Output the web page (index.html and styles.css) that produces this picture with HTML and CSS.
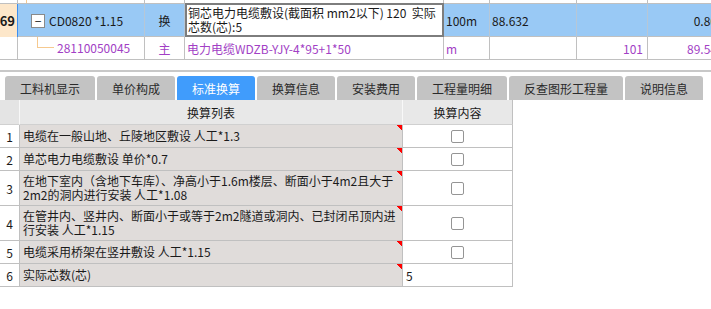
FILE: index.html
```html
<!DOCTYPE html>
<html lang="zh-CN">
<head>
  <meta charset="UTF-8">
  <title>标准换算</title>
  <link rel="stylesheet" href="styles.css">
</head>
<body>
  <div class="bill">
    <div class="row stub">
      <div class="c"></div>
      <div class="c"><span class="tree-up"></span></div>
      <div class="c"></div>
      <div class="c"></div>
      <div class="c"></div>
      <div class="c"></div>
      <div class="c"></div>
      <div class="c"></div>
    </div>
    <div class="row sel">
      <div class="c no">69</div>
      <div class="c code"><span class="fold">−</span>CD0820 *1.15</div>
      <div class="c mid">换</div>
      <div class="c edit">铜芯电力电缆敷设(截面积 mm2以下) 120&nbsp;&nbsp;实际<br>芯数(芯):5</div>
      <div class="c">100m</div>
      <div class="c">88.632</div>
      <div class="c"></div>
      <div class="c num">0.86</div>
    </div>
    <div class="row sub">
      <div class="c"></div>
      <div class="c code"><span class="branch"></span>28110050045</div>
      <div class="c mid">主</div>
      <div class="c">电力电缆WDZB-YJY-4*95+1*50</div>
      <div class="c">m</div>
      <div class="c"></div>
      <div class="c num">101</div>
      <div class="c num">89.54</div>
    </div>
  </div>

  <div class="tabs">
    <div class="tab w90">工料机显示</div>
    <div class="tab">单价构成</div>
    <div class="tab active">标准换算</div>
    <div class="tab">换算信息</div>
    <div class="tab">安装费用</div>
    <div class="tab w90">工程量明细</div>
    <div class="tab w114">反查图形工程量</div>
    <div class="tab">说明信息</div>
  </div>

  <div class="conv">
    <div class="h"></div>
    <div class="h">换算列表</div>
    <div class="h">换算内容</div>

    <div class="idx">1</div>
    <div class="item">电缆在一般山地、丘陵地区敷设 人工*1.3</div>
    <div class="val"><span class="check"></span></div>

    <div class="idx">2</div>
    <div class="item">单芯电力电缆敷设 单价*0.7</div>
    <div class="val"><span class="check"></span></div>

    <div class="idx">3</div>
    <div class="item">在地下室内（含地下车库）、净高小于1.6m楼层、断面小于4m2且大于<br>2m2的洞内进行安装 人工*1.08</div>
    <div class="val"><span class="check"></span></div>

    <div class="idx">4</div>
    <div class="item">在管井内、竖井内、断面小于或等于2m2隧道或洞内、已封闭吊顶内进<br>行安装 人工*1.15</div>
    <div class="val"><span class="check"></span></div>

    <div class="idx">5</div>
    <div class="item">电缆采用桥架在竖井敷设 人工*1.15</div>
    <div class="val"><span class="check"></span></div>

    <div class="idx">6</div>
    <div class="item">实际芯数(芯)</div>
    <div class="val text">5</div>
  </div>
</body>
</html>
```

FILE: styles.css
```css
body {
  margin: 0;
  font-family: "Noto Sans CJK SC", "Noto Sans", sans-serif;
  font-size: 12px;
  color: #1a1a1a;
  background: #fff;
  overflow: hidden;
}

/* top bill grid */
.bill {
  width: 722px;
}
.row {
  display: grid;
  grid-template-columns: 18px 127px 40px 259px 46px 87px 71px 74px;
  border-bottom: 1px solid #c0c0c0;
  box-sizing: border-box;
}
.row .c {
  border-right: 1px solid #c0c0c0;
  box-sizing: border-box;
  display: flex;
  align-items: center;
  padding: 0 2px;
  white-space: nowrap;
  overflow: hidden;
}
.stub {
  height: 4px;
}
.stub .c {
  padding: 0;
  align-items: stretch;
}
.tree-up {
  margin-left: 8px;
  border-left: 1px solid #f6c98f;
}
.sel {
  height: 33px;
  background: #99c9f5;
}
.sel .c {
  border-right-color: #b7c7d6;
}
.sel .no {
  background: #fde7ca;
  border-right: 1px solid #3d8ff0;
  justify-content: flex-end;
  font-weight: bold;
  font-size: 13px;
  padding: 0 2px 0 0;
}
.sel .code {
  padding-left: 13px;
}
.fold {
  width: 12px;
  height: 12px;
  border: 1px solid #8a8a8a;
  background: #fff;
  margin-right: 4px;
  display: flex;
  align-items: center;
  justify-content: center;
  line-height: 1;
}
.sel .edit {
  background: #fff;
  border: 2px solid #7d7d7d;
  margin-top: -1px;
  height: 34px;
  line-height: 14px;
  align-items: flex-start;
  padding: 1px 0 0 1px;
}
.mid {
  justify-content: center;
}
.num {
  justify-content: flex-end;
  padding-right: 4px !important;
}
.sub {
  height: 23px;
  color: #a23fc5;
}
.sub .code {
  align-items: flex-start;
  padding: 0;
  line-height: 21px;
}
.branch {
  width: 16px;
  height: 10px;
  margin-left: 19px;
  margin-right: 3px;
  border-left: 1px solid #f6c98f;
  border-bottom: 1px solid #f6c98f;
  flex: none;
}

/* tab strip */
.tabs {
  margin-top: 10px;
  border-top: 2px solid #c8c8c8;
  height: 30px;
  box-sizing: border-box;
  padding-left: 5px;
  display: flex;
  align-items: flex-end;
  gap: 2px;
  background: #fff;
}
.tab {
  width: 78px;
  height: 24px;
  background: #c3c3c3;
  border-radius: 3px 3px 0 0;
  display: flex;
  align-items: center;
  justify-content: center;
  color: #2a2a2a;
}
.tab.w90 {
  width: 90px;
}
.tab.w114 {
  width: 114px;
}
.tab.active {
  background: #409cfc;
  color: #fff;
}

/* conversion list */
.conv {
  display: grid;
  grid-template-columns: 20px 383px 110px;
  grid-template-rows: 25px 23px 23px 35px 35px 23px 23px;
}
.conv > div {
  border-right: 1px solid #c0c0c0;
  border-bottom: 1px solid #c0c0c0;
  box-sizing: border-box;
  display: flex;
  align-items: center;
  white-space: nowrap;
}
.conv .h {
  background: #e8e8e8;
  justify-content: center;
  border-right-color: #f8f8f8;
  border-bottom-color: #d0d0d0;
}
.conv .h:first-child {
  background: #e4e4e4;
}
.conv .h:nth-child(3) {
  border-right-color: #c0c0c0;
}
.idx {
  justify-content: center;
}
.item {
  padding-left: 3px;
  line-height: 14px;
  overflow: hidden;
  background: linear-gradient(225deg, #f00 4px, transparent 4px) no-repeat top right / 8px 8px, #e0dcda;
}
.val {
  justify-content: center;
  background: #fff;
}
.val.text {
  justify-content: flex-start;
  padding-left: 3px;
}
.check {
  width: 13px;
  height: 13px;
  border: 1px solid #959595;
  border-radius: 2px;
  background: #fff;
  box-sizing: border-box;
}
```
